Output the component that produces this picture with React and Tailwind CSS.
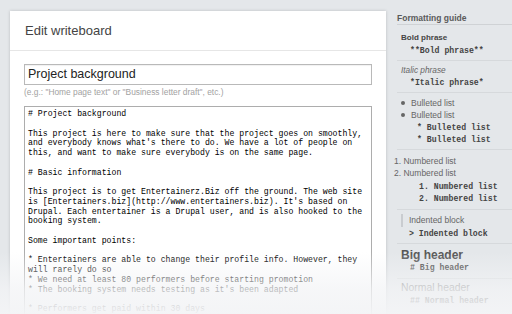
import React from "react";

const sans = { fontFamily: '"Liberation Sans", Arial, Helvetica, sans-serif' };
const mono = { fontFamily: '"Liberation Mono", "Courier New", monospace' };

const body = `# Project background

This project is here to make sure that the project goes on smoothly,
and everybody knows what's there to do. We have a lot of people on
this, and want to make sure everybody is on the same page.

# Basic information

This project is to get Entertainerz.Biz off the ground. The web site
is [Entertainers.biz](http://www.entertainers.biz). It's based on
Drupal. Each entertainer is a Drupal user, and is also hooked to the
booking system.

Some important points:

* Entertainers are able to change their profile info. However, they
will rarely do so
* We need at least 80 performers before starting promotion
* The booking system needs testing as it's been adapted

* Performers get paid within 30 days`;

function Mono({ children, className = "" }) {
  return (
    <div
      style={mono}
      className={`text-[8.2px] font-bold text-[#444] leading-[12px] whitespace-pre ${className}`}
    >
      {children}
    </div>
  );
}

export default function App() {
  return (
    <div
      style={sans}
      className="relative w-[512px] h-[314px] overflow-hidden bg-[#e4e7ea] flex"
    >
      {/* Main panel */}
      <div className="pl-[10px] pt-[11px] shrink-0">
        <div className="w-[376px] h-[303px] bg-white shadow-[0_0_3px_rgba(0,0,0,0.18)]">
          <div className="h-[40px] flex items-center px-[15px] border-b border-[#e6e6e6]">
            <span className="text-[13px] text-[#444]">Edit writeboard</span>
          </div>
          <div className="px-[14px] pt-[13px]">
            <div className="w-[348px] h-[21px] border border-[#b9b9b9] flex items-center px-[3px] shadow-[inset_0_1px_1px_rgba(0,0,0,0.06)]">
              <span className="text-[12.5px] text-[#222]">Project background</span>
            </div>
            <div className="mt-[2px] text-[8.4px] leading-[10px] text-[#a2a2a2]">
              (e.g.: "Home page text" or "Business letter draft", etc.)
            </div>
            <div className="mt-[9px] w-[348px] h-[220px] border border-[#adadad] pl-[3px] pt-[2px]">
              <div
                style={mono}
                className="text-[8.2px] leading-[9.75px] text-[#000] whitespace-pre"
              >
                {body}
              </div>
            </div>
          </div>
        </div>
      </div>

      {/* Sidebar */}
      <div className="flex-1 pl-[11px] pt-[12px]">
        <div className="h-[13px] leading-[13px] text-[8.5px] font-bold text-[#5a5a5a] border-b border-[#cfd2d5]">
          Formatting guide
        </div>

        <div className="pt-[7px] pb-[3px] border-b border-[#d6d9dc]">
          <div className="pl-[4px] leading-[12px] text-[8px] font-bold text-[#444]">Bold phrase</div>
          <Mono className="pl-[13px] mt-[1px]">**Bold phrase**</Mono>
        </div>

        <div className="pt-[3px] pb-[3px] border-b border-[#d6d9dc]">
          <div className="pl-[4px] leading-[12px] text-[8.3px] italic text-[#666]">Italic phrase</div>
          <Mono className="pl-[13px] mt-[1px]">*Italic phrase*</Mono>
        </div>

        <div className="pt-[4px] pb-[3px] border-b border-[#d6d9dc]">
          <div className="flex items-center leading-[12px] text-[8.5px] text-[#666]">
            <span className="ml-[4px] w-[4px] h-[4px] rounded-full bg-[#666]" />
            <span className="ml-[6px]">Bulleted list</span>
          </div>
          <div className="flex items-center leading-[12px] text-[8.5px] text-[#666]">
            <span className="ml-[4px] w-[4px] h-[4px] rounded-full bg-[#666]" />
            <span className="ml-[6px]">Bulleted list</span>
          </div>
          <Mono className="pl-[20px] mt-[1px]">* Bulleted list</Mono>
          <Mono className="pl-[20px]">* Bulleted list</Mono>
        </div>

        <div className="pt-[5px] pb-[4px] border-b border-[#d6d9dc]">
          <div className="leading-[12px] text-[8.5px] text-[#666] -ml-[3px]">1. Numbered list</div>
          <div className="leading-[12px] text-[8.5px] text-[#666] -ml-[3px]">2. Numbered list</div>
          <Mono className="pl-[22px] mt-[2px] leading-[11px]">1. Numbered list</Mono>
          <Mono className="pl-[22px] leading-[11px]">2. Numbered list</Mono>
        </div>

        <div className="pt-[4px] pb-[3px] border-b border-[#d6d9dc]">
          <div className="flex items-stretch ml-[4px]">
            <span className="w-[2px] bg-[#c9ccd0]" />
            <span className="ml-[6px] leading-[13px] text-[8.5px] text-[#666]">Indented block</span>
          </div>
          <Mono className="pl-[12px] mt-[1px]">&gt; Indented block</Mono>
        </div>

        <div className="pt-[4px] pb-[4px] border-b border-[#d6d9dc]">
          <div className="pl-[4px] leading-[14px] text-[12px] font-bold text-[#555]">Big header</div>
          <Mono className="pl-[13px] leading-[11px]"># Big header</Mono>
        </div>

        <div className="pt-[2px]">
          <div className="pl-[4px] leading-[14px] text-[10.4px] text-[#777]">Normal header</div>
          <Mono className="pl-[13px] leading-[11px]">## Normal header</Mono>
        </div>
      </div>

      {/* Bottom fade overlay */}
      <div className="absolute left-0 right-0 bottom-0 h-[62px] bg-linear-to-b from-[rgba(243,244,246,0)] via-[rgba(243,244,246,0.75)] via-60% to-[rgba(243,244,246,0.97)] pointer-events-none" />
    </div>
  );
}
